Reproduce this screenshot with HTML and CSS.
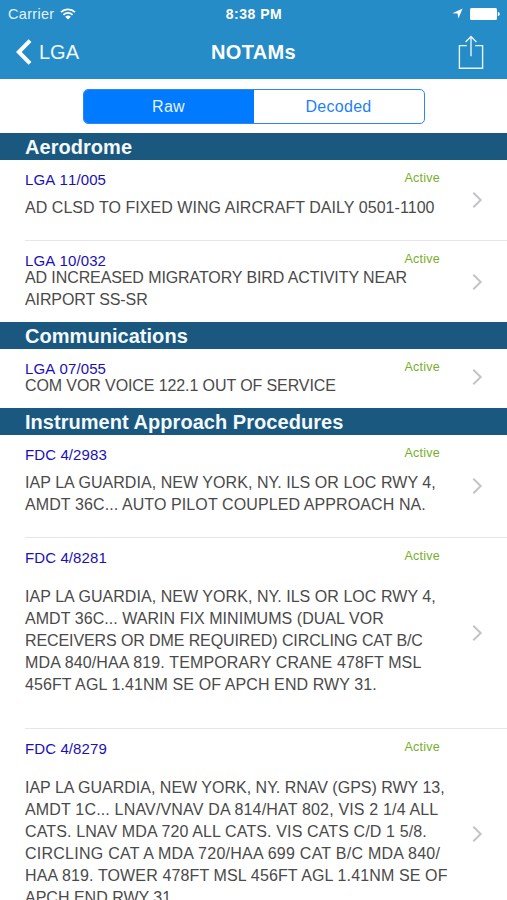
FILE: index.html
```html
<!DOCTYPE html>
<html lang="en">
<head>
    <meta charset="UTF-8">
    <meta name="viewport" content="width=device-width, initial-scale=1.0">
    <title>NOTAMs</title>
    <link rel="stylesheet" href="styles.css">
</head>
<body>
    <div class="screen">
        <header class="header">
            <div class="status-bar">
                <div class="status-left">
                    <span class="carrier">Carrier</span>
                    <svg class="wifi" width="16" height="12" viewBox="0 0 16 12">
                        <path d="M1 4.2a10 10 0 0 1 14 0M3.4 6.8a6.6 6.6 0 0 1 9.2 0" fill="none" stroke="#fff" stroke-width="1.7"/>
                        <path d="M8 11.6L5.2 8.8a4 4 0 0 1 5.6 0z" fill="#fff"/>
                    </svg>
                </div>
                <span class="clock">8:38 PM</span>
                <div class="status-right">
                    <svg class="location" width="11" height="11" viewBox="0 0 11 11">
                        <path d="M10.6 0.4L6.4 10.4L5.6 5.6L0.4 5.2z" fill="#fff"/>
                    </svg>
                    <svg class="battery" width="30" height="12" viewBox="0 0 30 12">
                        <rect x="0" y="0" width="27" height="12" rx="1.5" fill="#fff"/>
                        <path d="M27.8 4a2 2 0 0 1 0 4z" fill="#fff"/>
                    </svg>
                </div>
            </div>
            <nav class="nav-bar">
                <a class="back">
                    <svg width="16" height="26" viewBox="0 0 16 26">
                        <path d="M14 1.6L2.8 13L14 24.4" fill="none" stroke="#fff" stroke-width="4"/>
                    </svg>
                    <span>LGA</span>
                </a>
                <h1 class="title">NOTAMs</h1>
                <a class="share">
                    <svg width="26" height="35" viewBox="0 0 26 35">
                        <path d="M8.8 10.6H1.4v22.7h23.2V10.6h-7.4M13 21.2V1.6M7.6 7L13 1.6L18.4 7" fill="none" stroke="#e6f3fb" stroke-width="1.4"/>
                    </svg>
                </a>
            </nav>
        </header>

        <div class="toolbar">
            <div class="segmented">
                <div class="segment active">Raw</div>
                <div class="segment">Decoded</div>
            </div>
        </div>

        <main class="list">
            <h2 class="section-title">Aerodrome</h2>
            <div class="row row-medium">
                <div class="row-content">
                    <div class="row-head">
                        <span class="notam-id">LGA 11/005</span>
                        <span class="status">Active</span>
                    </div>
                    <p class="notam-text"><span class="wide-1">AD CLSD TO FIXED WING AIRCRAFT DAILY 0501-1100</span></p>
                </div>
                <svg class="chevron" width="11" height="18" viewBox="0 0 11 18"><path d="M1.3 1.8L8.7 9L1.3 16.2"/></svg>
            </div>
            <div class="row row-medium tight last">
                <div class="row-content">
                    <div class="row-head">
                        <span class="notam-id">LGA 10/032</span>
                        <span class="status">Active</span>
                    </div>
                    <p class="notam-text"><span class="narrow">AD INCREASED MIGRATORY BIRD ACTIVITY NEAR</span><br><span class="narrow">AIRPORT SS-SR</span></p>
                </div>
                <svg class="chevron" width="11" height="18" viewBox="0 0 11 18"><path d="M1.3 1.8L8.7 9L1.3 16.2"/></svg>
            </div>

            <h2 class="section-title">Communications</h2>
            <div class="row row-small tight last">
                <div class="row-content">
                    <div class="row-head">
                        <span class="notam-id">LGA 07/055</span>
                        <span class="status">Active</span>
                    </div>
                    <p class="notam-text"><span class="narrow">COM VOR VOICE 122.1 OUT OF SERVICE</span></p>
                </div>
                <svg class="chevron" width="11" height="18" viewBox="0 0 11 18"><path d="M1.3 1.8L8.7 9L1.3 16.2"/></svg>
            </div>

            <h2 class="section-title">Instrument Approach Procedures</h2>
            <div class="row row-large">
                <div class="row-content">
                    <div class="row-head">
                        <span class="notam-id">FDC 4/2983</span>
                        <span class="status">Active</span>
                    </div>
                    <p class="notam-text"><span class="wide-1">IAP LA GUARDIA, NEW YORK, NY. ILS OR LOC RWY 4,</span><br><span class="wide-2">AMDT 36C... AUTO PILOT COUPLED APPROACH NA.</span></p>
                </div>
                <svg class="chevron" width="11" height="18" viewBox="0 0 11 18"><path d="M1.3 1.8L8.7 9L1.3 16.2"/></svg>
            </div>
            <div class="row row-xlarge loose">
                <div class="row-content">
                    <div class="row-head">
                        <span class="notam-id">FDC 4/8281</span>
                        <span class="status">Active</span>
                    </div>
                    <p class="notam-text"><span class="wide-1">IAP LA GUARDIA, NEW YORK, NY. ILS OR LOC RWY 4,</span><br><span class="wide-1">AMDT 36C... WARIN FIX MINIMUMS (DUAL VOR</span><br><span class="narrow">RECEIVERS OR DME REQUIRED) CIRCLING CAT B/C</span><br><span class="wide-3">MDA 840/HAA 819. TEMPORARY CRANE 478FT MSL</span><br><span class="wide-2">456FT AGL 1.41NM SE OF APCH END RWY 31.</span></p>
                </div>
                <svg class="chevron" width="11" height="18" viewBox="0 0 11 18"><path d="M1.3 1.8L8.7 9L1.3 16.2"/></svg>
            </div>
            <div class="row row-xxlarge loose">
                <div class="row-content">
                    <div class="row-head">
                        <span class="notam-id">FDC 4/8279</span>
                        <span class="status">Active</span>
                    </div>
                    <p class="notam-text">IAP LA GUARDIA, NEW YORK, NY. RNAV (GPS) RWY 13,<br><span class="wide-4">AMDT 1C... LNAV/VNAV DA 814/HAT 802, VIS 2 1/4 ALL</span><br><span class="wide-3">CATS. LNAV MDA 720 ALL CATS. VIS CATS C/D 1 5/8.</span><br><span class="wide-5">CIRCLING CAT A MDA 720/HAA 699 CAT B/C MDA 840/</span><br><span class="wide-3">HAA 819. TOWER 478FT MSL 456FT AGL 1.41NM SE OF</span><br>APCH END RWY 31.</p>
                </div>
                <svg class="chevron" width="11" height="18" viewBox="0 0 11 18"><path d="M1.3 1.8L8.7 9L1.3 16.2"/></svg>
            </div>
        </main>
    </div>
</body>
</html>
```

FILE: styles.css
```css
* {
    box-sizing: border-box;
    margin: 0;
    padding: 0;
}

body {
    font-family: "Liberation Sans", Arial, sans-serif;
    background-color: #fff;
    color: #4a4a4a;
}

.screen {
    width: 507px;
    height: 900px;
    overflow: hidden;
    background-color: #fff;
}

/* Header */
.header {
    height: 79px;
    background-color: #268cc7;
    color: #fff;
}

.status-bar {
    display: grid;
    grid-template-columns: 1fr auto 1fr;
    align-items: center;
    height: 27px;
    padding: 0 7px 0 8px;
    font-size: 14.5px;
}

.status-left {
    display: flex;
    align-items: center;
    gap: 6px;
}

.carrier {
    color: #e3f1fa;
    letter-spacing: 0.3px;
}

.clock {
    font-size: 14px;
    font-weight: bold;
    letter-spacing: 0.5px;
}

.status-right {
    display: flex;
    align-items: center;
    justify-content: flex-end;
    gap: 7px;
}

.nav-bar {
    display: grid;
    grid-template-columns: 1fr auto 1fr;
    align-items: center;
    height: 50px;
    padding: 0 23px;
}

.back {
    display: flex;
    align-items: center;
    gap: 7px;
    margin-left: -7px;
    font-size: 20px;
    color: #f0f8fd;
}

.title {
    font-size: 20px;
    font-weight: bold;
    letter-spacing: 0.3px;
}

.share {
    display: flex;
    justify-content: flex-end;
}

/* Raw / Decoded switch */
.toolbar {
    display: flex;
    justify-content: center;
    height: 54px;
    padding-top: 10px;
}

.segmented {
    display: flex;
    width: 342px;
    height: 35px;
    border: 1px solid #2e86f5;
    border-radius: 5px;
    overflow: hidden;
}

.segment {
    flex: 1;
    text-align: center;
    line-height: 34px;
    font-size: 16px;
    letter-spacing: 0.3px;
    color: #1f7ff5;
}

.segment.active {
    background-color: #007aff;
    color: #e6f2ff;
}

/* List */
.section-title {
    height: 27px;
    padding-left: 25px;
    background-color: #1a587f;
    color: #f4f9fc;
    font-size: 20px;
    line-height: 28px;
    font-weight: bold;
    letter-spacing: 0.04px;
}

.row {
    display: flex;
    align-items: center;
    margin-left: 25px;
    padding-right: 24px;
    border-bottom: 1px solid #e6e6e6;
}

.row.last {
    border-bottom: none;
}

.row-small {
    height: 59px;
    padding-bottom: 3px;
}

.row-medium {
    height: 81px;
}

.row-large {
    height: 103px;
}

.row-xlarge {
    height: 191px;
}

.row-xxlarge {
    height: 211px;
}

.row-content {
    align-self: flex-start;
    flex: 1;
    padding-top: 10px;
}

.row-head {
    display: flex;
    justify-content: space-between;
    width: 415px;
    height: 20px;
}

.notam-id {
    font-size: 15px;
    line-height: 20px;
    font-kerning: none;
    letter-spacing: 0.1px;
    color: #1a10b8;
}

.status {
    font-size: 12.5px;
    line-height: 16px;
    letter-spacing: 0.25px;
    color: #76b02a;
}

.notam-text {
    margin-top: 7px;
    font-size: 16px;
    line-height: 22px;
    white-space: nowrap;
}

.tight .notam-text {
    margin-top: -4px;
}

.loose .notam-text {
    margin-top: 18px;
}

/* Line tracking */
.narrow {
    letter-spacing: -0.1px;
}

.wide-1 {
    letter-spacing: 0.05px;
}

.wide-2 {
    letter-spacing: 0.1px;
}

.wide-3 {
    letter-spacing: 0.13px;
}

.wide-4 {
    letter-spacing: 0.17px;
}

.wide-5 {
    letter-spacing: 0.25px;
}

.chevron {
    flex: none;
}

.chevron path {
    fill: none;
    stroke: #c4c4c8;
    stroke-width: 2;
}
```
